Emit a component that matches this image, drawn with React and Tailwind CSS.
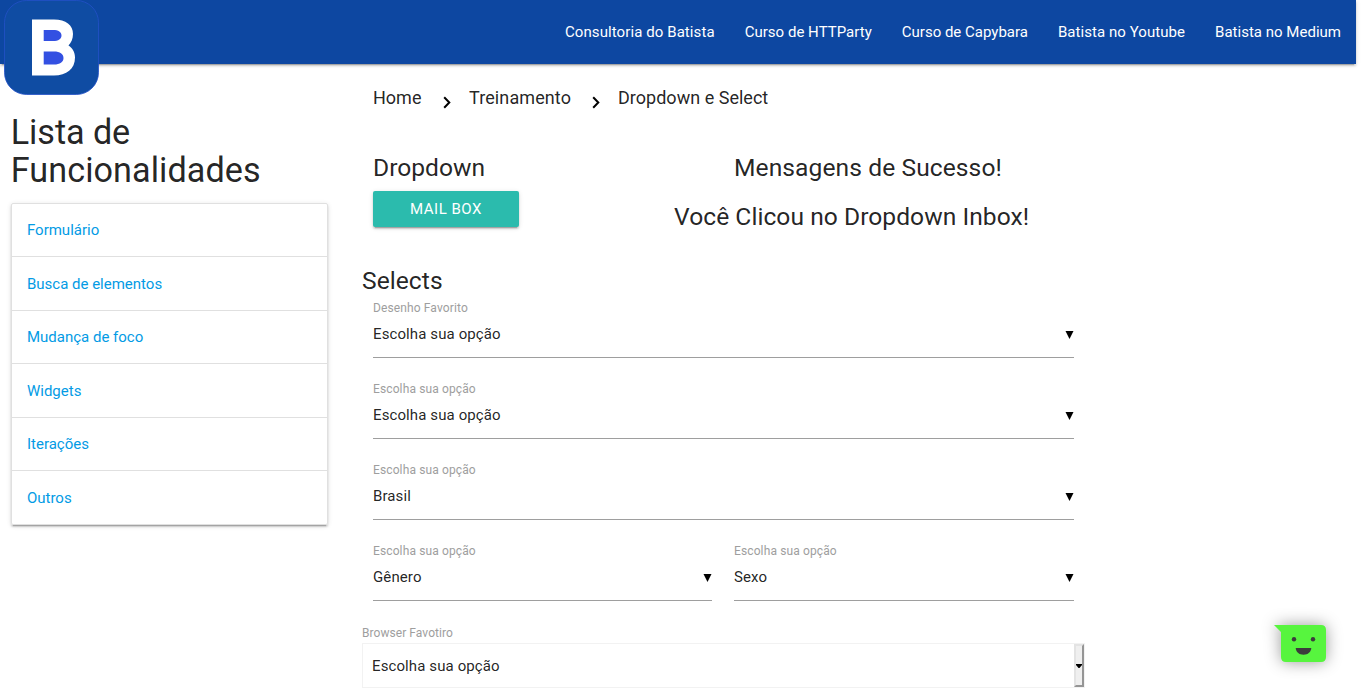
import React from "react";

const navLinks = [
  { text: "Consultoria do Batista", tracking: "tracking-[0.085px]" },
  { text: "Curso de HTTParty", tracking: "tracking-[0.020px]" },
  { text: "Curso de Capybara", tracking: "tracking-[0px]" },
  { text: "Batista no Youtube", tracking: "tracking-[0.060px]" },
  { text: "Batista no Medium", tracking: "tracking-[0.010px]" },
];

const features = [
  "Formulário",
  "Busca de elementos",
  "Mudança de foco",
  "Widgets",
  "Iterações",
  "Outros",
];

function Logo() {
  return (
    <svg className="absolute left-1 top-0 z-10" width="95" height="95" viewBox="0 0 95 95" aria-hidden="true">
      <rect x="0.5" y="0.5" width="94" height="94" rx="22" fill="#0f4ca3" stroke="#2350c8" strokeWidth="0.8" />
      <path
        fillRule="evenodd"
        fill="#fff"
        d="M28 19.5H50C62 19.5 69 25 69 34C69 39 67 43 64.500 45.500C68.500 48 71 52 71 57.500C71 69 62.500 75.500 50 75.500H28Z"
      />
      <path
        fill="#3350e2"
        d="M39.700 30H49C54.500 30 57.500 32 57.500 35.500C57.500 39 54.500 41 49 41H39.700ZM39.700 51.500H50C56 51.500 59.500 54 59.500 58C59.500 62 56 64.500 50 64.500H39.700Z"
      />
    </svg>
  );
}

function Chevron() {
  return (
    <svg className="mt-[3px]" width="8" height="13" viewBox="0 0 8 13" aria-hidden="true">
      <path d="M1.200 1.200L6.300 6.500L1.200 11.800" fill="none" stroke="#000" strokeWidth="2" />
    </svg>
  );
}

function SelectField({ label, value }) {
  return (
    <div className="h-[81px] min-w-0 flex-1">
      <div className="flex h-[11px] items-center whitespace-nowrap text-[12px] leading-none tracking-[0.120px] text-[#9e9e9e]">{label}</div>
      <div className="flex h-[45px] items-center justify-between border-b border-[#9e9e9e] pb-[2px]">
        <span className="tracking-[0.110px]">{value}</span>
        <svg className="mt-px" width="9" height="8" viewBox="0 0 9 8" aria-hidden="true">
          <path d="M0.500 0H8.500L4.500 8Z" fill="#000" />
        </svg>
      </div>
    </div>
  );
}

function ChatBubble() {
  return (
    <svg
      className="absolute left-[1274px] top-[625px] overflow-visible drop-shadow-[0_0_8px_rgba(0,0,0,0.4)]"
      width="52"
      height="37"
      viewBox="0 0 52 37"
      role="img"
      aria-label="Chat"
    >
      <path d="M0 0H47Q52 0 52 5V32Q52 37 47 37H12Q7 37 7 32V7Z" fill="#57f53e" />
      <circle cx="20" cy="14.300" r="2.200" fill="#3c3c3c" />
      <circle cx="39" cy="14.300" r="2.200" fill="#3c3c3c" />
      <path d="M21.700 23H37.300C37 27 34 29.700 29.500 29.700C25 29.700 22 27 21.700 23Z" fill="#3c3c3c" />
    </svg>
  );
}

export default function App() {
  return (
    <div className="relative h-[694px] w-full overflow-hidden bg-white font-['Roboto',sans-serif] text-[15px] leading-[22.5px] text-[rgba(0,0,0,0.87)]">
      <header className="h-16 w-[1356px] bg-[#0d47a1] shadow-[0_2px_2px_0_rgba(0,0,0,0.14),0_1px_5px_0_rgba(0,0,0,0.12),0_3px_1px_-2px_rgba(0,0,0,0.2)]">
        <Logo />
        <nav className="flex h-16 items-center justify-end text-white">
          {navLinks.map((link) => (
            <a key={link.text} href="#" className={`px-[15px] ${link.tracking}`}>{link.text}</a>
          ))}
        </nav>
      </header>

      <div className="flex w-[1356px]">
        <aside className="w-[339px] shrink-0 px-[11.25px] pt-[50px]">
          <h4 className="-ml-[0.5px] text-[34.2px] leading-[37.62px]">
            <span className="block tracking-[-0.080px]">Lista de</span>
            <span className="block tracking-[0.060px]">Funcionalidades</span>
          </h4>
          <ul className="mt-[13.660px] rounded-[2px] border border-[#e0e0e0] shadow-[0_2px_2px_0_rgba(0,0,0,0.14),0_1px_5px_0_rgba(0,0,0,0.12),0_3px_1px_-2px_rgba(0,0,0,0.2)]">
            {features.map((t) => (
              <li key={t} className="h-[53.5px] border-b border-[#e0e0e0] pb-[14px] pl-[14.700px] pt-[15.350px] text-[#039be5] last:h-[52.5px] last:border-b-0">
                <a href="#">{t}</a>
              </li>
            ))}
          </ul>
        </aside>

        <main className="ml-[23px] w-[722.600px] shrink-0">
          <nav className="flex h-[66px] items-center pl-[11px] text-[18px] leading-[27px]">
            <a href="#" className="w-[49px]">Home</a>
            <span className="w-[47px] pl-[21px] pt-[7px]"><Chevron /></span>
            <a href="#" className="w-[102px] tracking-[0.100px]">Treinamento</a>
            <span className="w-[47px] pl-[21px] pt-[7px]"><Chevron /></span>
            <a href="#" className="tracking-[0.020px]">Dropdown e Select</a>
          </nav>

          <section className="flex h-[137px] px-[11px] pt-[24px]">
            <div className="w-[301px]">
              <h5 className="text-[24.6px] leading-[27px]">Dropdown</h5>
              <button className="mt-[10px] h-9 w-[146px] rounded-[2px] bg-[#2bbbad] text-[15px] tracking-[0.5px] text-white shadow-[0_2px_2px_0_rgba(0,0,0,0.14),0_1px_5px_0_rgba(0,0,0,0.12),0_3px_1px_-2px_rgba(0,0,0,0.2)]">
                MAIL BOX
              </button>
            </div>
            <div className="whitespace-nowrap text-[24.6px] leading-[27px]">
              <h5 className="pl-[60px] tracking-[0.080px]">Mensagens de Sucesso!</h5>
              <h5 className="mt-[22px] tracking-[0.040px]">Você Clicou no Dropdown Inbox!</h5>
            </div>
          </section>

          <h5 className="h-[35px] text-[24.6px] leading-[27px] tracking-[0.050px]">Selects</h5>
          <form className="pl-[11px] pr-[10.600px]">
            <SelectField label="Desenho Favorito" value="Escolha sua opção" />
            <SelectField label="Escolha sua opção" value="Escolha sua opção" />
            <SelectField label="Escolha sua opção" value="Brasil" />
            <div className="grid grid-cols-[339px_340px] gap-[22px]">
              <SelectField label="Escolha sua opção" value="Gênero" />
              <SelectField label="Escolha sua opção" value="Sexo" />
            </div>
          </form>
          <div className="flex h-[13px] items-center text-[12px] leading-none tracking-[0.060px] text-[#9e9e9e]">Browser Favotiro</div>
          <div className="mt-[4px] flex h-[45px] items-center justify-between border border-[#f2f2f2] pl-[9px]">
            <span className="pt-[2px] tracking-[0.110px]">Escolha sua opção</span>
            <span className="flex h-[43px] w-[10px] items-center justify-center border-2 border-b-[#959595] border-l-[#e3e3e3] border-r-[#959595] border-t-[#e3e3e3] bg-[#efefef]">
              <svg width="6" height="4" viewBox="0 0 6 4" className="shrink-0" aria-hidden="true">
                <path d="M0 0H6V1L3.500 4H2.500L0 1Z" fill="#000" />
              </svg>
            </span>
          </div>
        </main>
      </div>
      <ChatBubble />
    </div>
  );
}
